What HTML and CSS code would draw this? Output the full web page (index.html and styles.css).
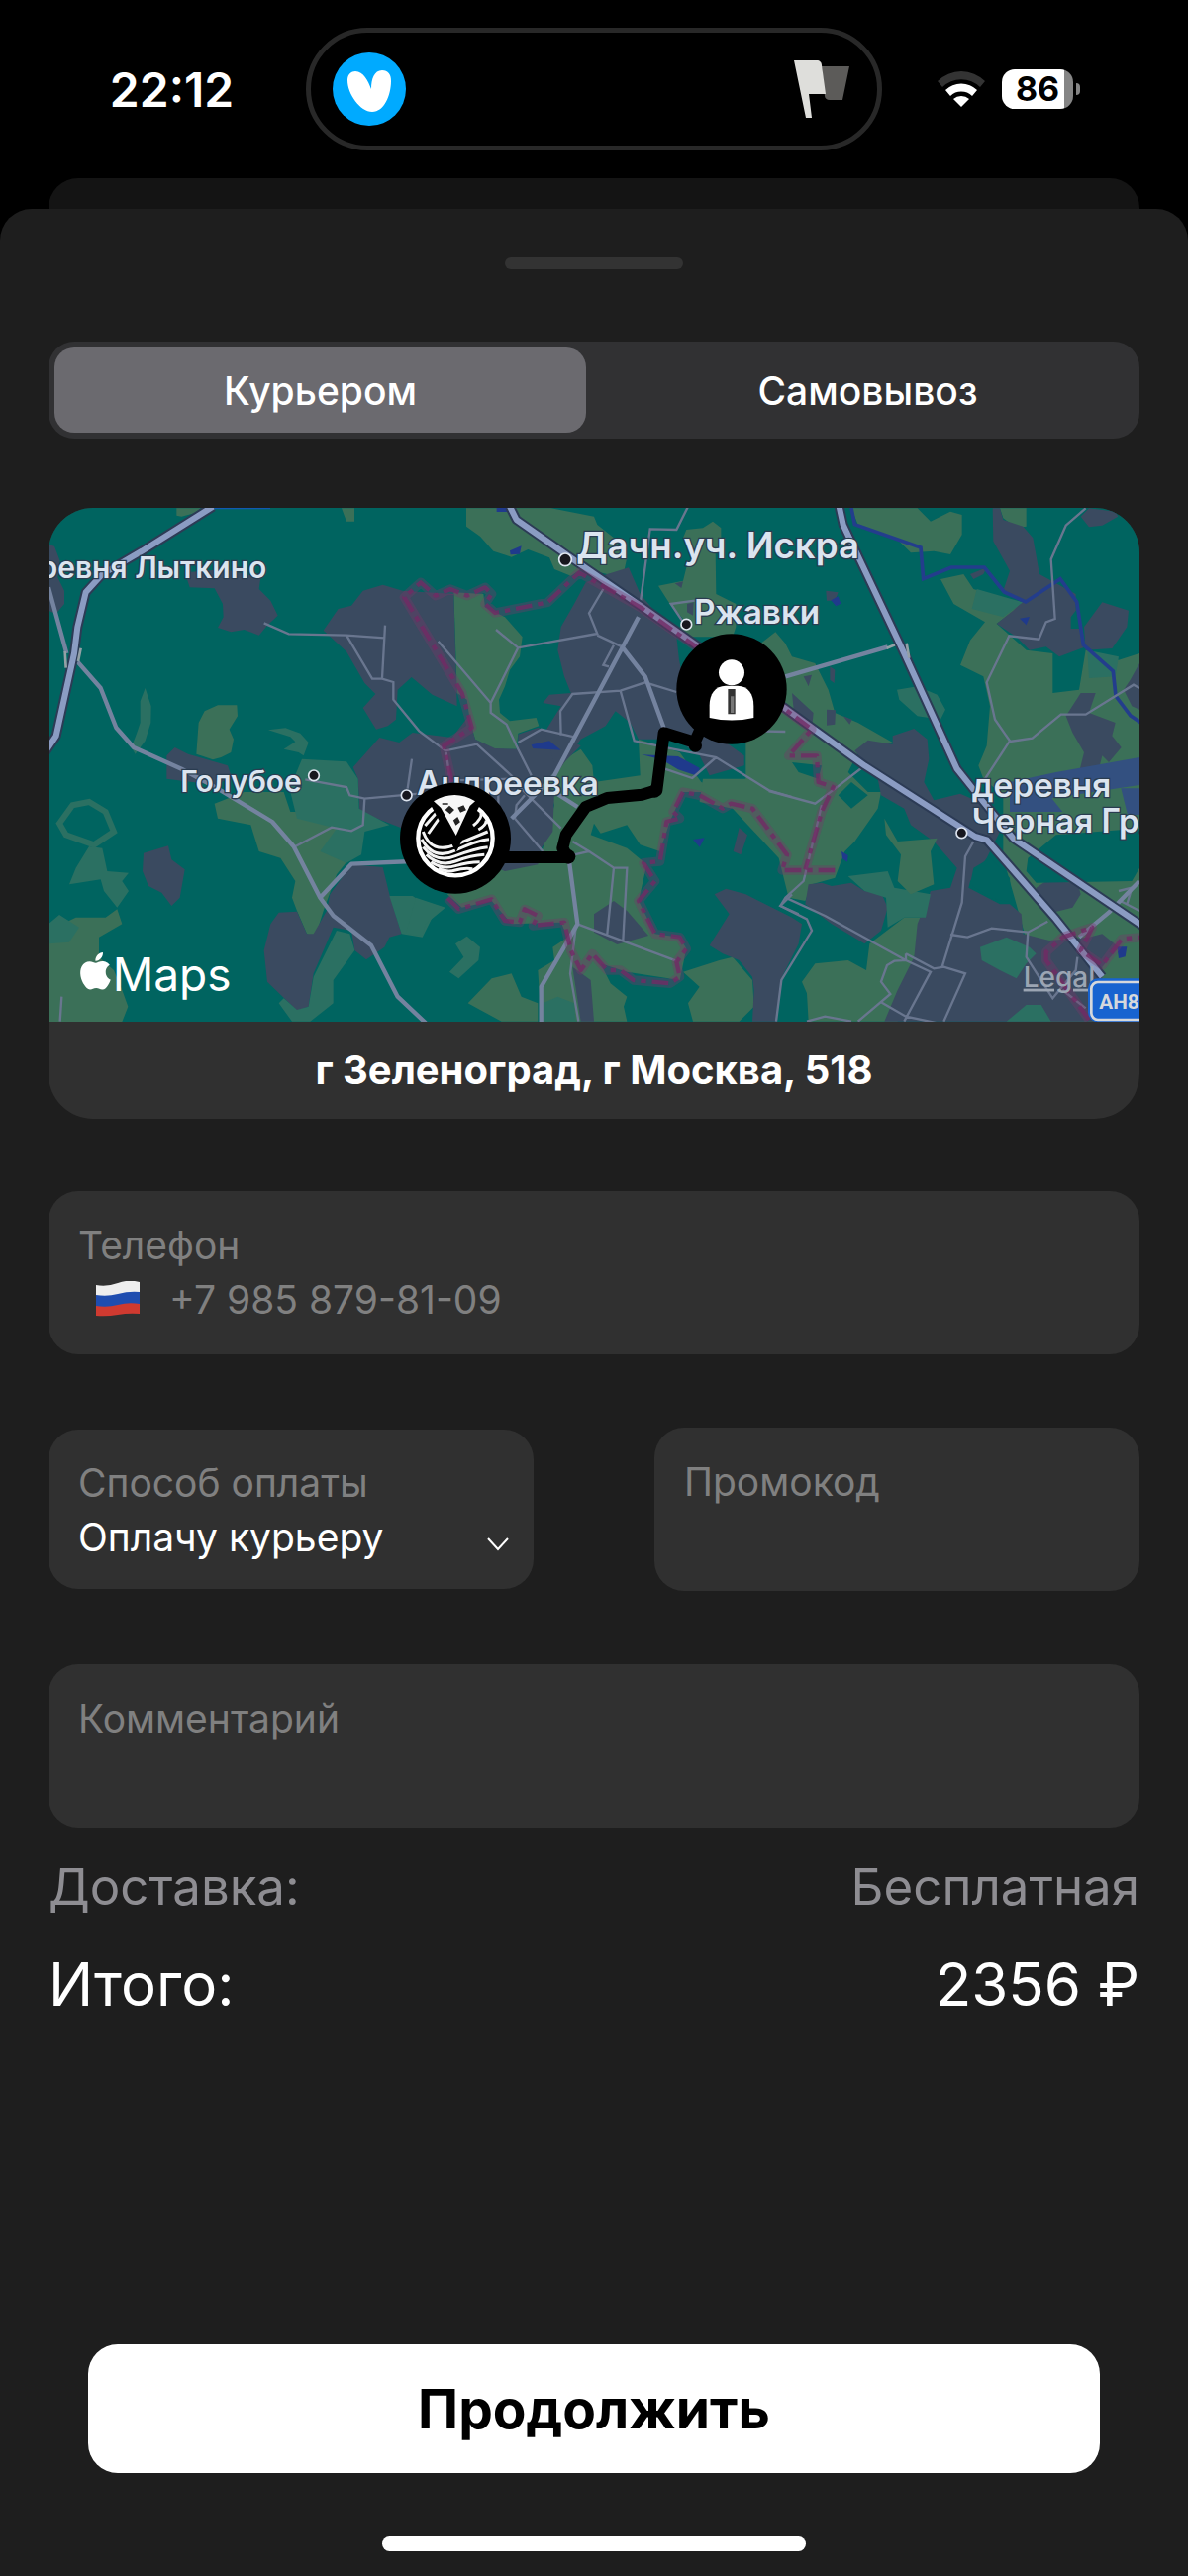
FILE: index.html
```html
<!DOCTYPE html>
<html lang="ru">
<head>
  <meta charset="UTF-8">
  <meta name="viewport" content="width=device-width, initial-scale=1.0">
  <title>Оформление заказа</title>
  <link rel="stylesheet" href="styles.css">
</head>
<body>
  <header class="status-bar">
    <div class="status-left">22:12</div>
    <div class="island">
      <svg class="island-logo" viewBox="0 0 74 74" aria-hidden="true">
        <circle cx="37" cy="37" r="37" fill="#00aaff"/>
        <path d="M15 28c0-6 4-9 8-9 8 0 13 10 16 18 0-10 3-19 11-19 6 0 9 4 9 11 0 14-7 31-19 31S15 42 15 28z" fill="#fff"/>
      </svg>
      <svg class="island-flag" viewBox="0 0 56 58" aria-hidden="true">
        <path d="M28 6h28l-7 34H36c-3 0-5-2-5-4z" fill="#5c5b59"/>
        <path d="M0 0h23c3 0 5 2 5 5l4 29H15l3 24h-6z" fill="#dededb"/>
      </svg>
    </div>
    <div class="status-right">
      <svg class="wifi" viewBox="0 0 48 36" aria-hidden="true">
        <path d="M0 10a34 34 0 0 1 48 0l-5 6a27 27 0 0 0-38 0z" fill="#333"/>
        <path d="M8 19a23 23 0 0 1 32 0l-5 6a16 16 0 0 0-22 0z" fill="#fff"/>
        <path d="M16 28a12 12 0 0 1 16 0l-8 8z" fill="#fff"/>
      </svg>
      <div class="battery"><span>86</span></div>
      <div class="battery-tip"></div>
    </div>
  </header>

  <div class="sheet-behind"></div>

  <main class="sheet">
    <div class="handle"></div>

    <div class="segmented">
      <button class="segment active" type="button">Курьером</button>
      <button class="segment" type="button">Самовывоз</button>
    </div>

    <section class="map-card">
      <svg class="map" viewBox="0 0 3306 1557" preserveAspectRatio="xMidYMid slice">
        <!-- meadows -->
        <g fill="#3b7058">
          <g transform="translate(-27 -39)">
            <path d="M415 40H488L470 55 430 65 415 62zM915 40H954V80H930zM540 637L598 637 600 670 575 710 588 740 580 780 550 795 525 802 475 785 482 690 500 655z"/>
            <path d="M530 935L620 900 740 900 760 960 900 960 960 1030 940 1100 900 1150 860 1260 835 1340 810 1330 780 1260 765 1220 775 1170 730 1100 665 1080 640 1000 540 980z"/>
          </g>
          <g transform="translate(1053 -39)">
            <path d="M213 40H470L600 65 610 90 660 130 700 190 690 235 640 240 600 230 560 225 530 245 480 225 465 190 400 165 350 188 295 170 255 125 213 95z"/>
            <path d="M175 295L265 300 270 340 330 370 383 430 375 490 345 530 330 580 312 620 315 660 345 685 425 675 433 700 370 722 365 770 300 770 240 740 225 690 215 620 185 600z"/>
            <path d="M795 275L870 260 880 220 900 180 870 130 880 105 930 100 960 80 985 100 985 140 968 170 970 300 1030 330 1030 400 1020 430 850 430 870 375 830 330z"/>
          </g>
          <g transform="translate(1053 861)">
            <path d="M480 40L450 -60 560 -130 595 -80 600 -30 740 -50 735 -160 860 -120 925 -30 1000 0 870 0 830 90 800 180 740 160 700 100 620 125 600 95 590 130 700 170 760 220 735 330 785 430 860 440 880 475 860 570 700 545 620 520 650 580 700 620 690 650 700 695H440L430 540 480 510 475 470 520 440 500 395 350 400 290 330 200 350 155 310 330 230 440 190z"/>
            <path d="M290 565L350 550 380 620 430 640V695H320L218 640zM900 695L885 640 920 590 870 545 980 510 1020 500 1080 570 1085 650 1040 695z"/>
          </g>
          <g transform="translate(2193 -39)">
            <path d="M-60 470L10 415 40 450 60 490 130 510 170 590 190 660 260 690 365 750 260 780 230 840 290 900 330 900 320 950 250 1050 220 1080 190 1160 120 1180 100 1230 50 1220 20 1100 -120 950 -220 930 -210 860 -80 860 -80 740z"/>
            <path d="M240 40H440L480 80 540 50 575 60 575 120 540 180 490 170 420 175 380 135 260 90zM690 40H770V95L740 100 700 70z"/>
            <path d="M510 255L580 240 610 285 690 310 760 330 680 390 770 470 850 480 850 600 930 590 950 470 1050 500 1113 480V1595H840L700 1100 700 910 640 860 625 820 650 760 660 640 640 550 570 515 600 440 645 385 550 330z"/>
          </g>
          <g transform="translate(2193 861)">
            <path d="M90 575L130 520 230 510 285 540 295 460 400 380 470 380 430 500 380 695H110L105 610z"/>
          </g>
          <path d="M0 1281L83 1241 173 1241 208 1216 223 1261 153 1301 153 1361 198 1401 223 1461 241 1511 223 1557H0z"/>
        </g>

        <!-- built-up areas -->
        <g fill="#3a4a60">
          <g transform="translate(-27 -39)">
            <path d="M27 150L45 155 62 200 55 250 75 290 75 330 50 360 27 350zM440 235L560 225 670 250 665 285 700 320 722 365 690 395 665 425 620 408 580 415 540 402 557 370 555 330 530 283 455 280z"/>
            <path d="M860 410L905 345 945 335 980 290 1040 272 1100 290 1255 300 1265 640 1190 605 1127 552 1085 590 1080 680 1055 700 1020 710 980 645 1018 603 985 570 930 475z"/>
            <path d="M950 825L1030 735 1090 750 1130 720 1250 735 1300 670 1320 740 1380 768 1450 770 1450 725 1510 705 1580 730 1640 760 1530 870 1560 900 1555 1020 1520 1070 1510 1120 1410 1140 1100 1010 970 960 965 860z"/>
            <path d="M385 790L410 765 450 785 570 820 580 850 540 880 385 860z"/>
          </g>
          <g transform="translate(1053 -39)">
            <path d="M705 220L740 300 850 430 858 500 900 700 1000 750 1055 790 1055 820 950 850 920 790 850 740 735 740 710 690 665 655 635 700 560 740 490 840 450 720 500 640 445 630 465 605 530 600 510 550 490 470 500 400 540 330 575 265 640 240z"/>
            <path d="M845 268L870 262 865 282zM882 330L902 325 900 365 882 355z"/>
          </g>
          <g transform="translate(2193 -39)">
            <path d="M668 40H690L700 75 760 95 790 130 810 240 920 300 920 350 905 370 905 405 940 405 950 460 870 490 830 460 780 470 740 430 680 390 730 350 760 320 700 290 720 230 670 140z"/>
            <path d="M1000 325L1080 350 1075 400 1030 465 950 470 945 400zM935 65L960 40 1040 50 1048 65 1000 92 960 97zM60 600L125 660 120 710 65 650zM165 650L192 652 190 695 165 698zM1113 510L1085 560 1065 590 1090 640 1113 650z"/>
            <path d="M890 670L935 600 980 600 960 660 1040 690 1030 730 1058 765 1020 810 1000 790 990 830 930 840 945 780 910 720zM600 240L650 220 640 240 610 255zM163 290L200 295 190 320 165 320zM95 550L120 545 110 580zM175 520L190 530 188 570 175 560zM215 670L242 680 235 695z"/>
            <path d="M250 775L290 743 365 755V730L430 708 470 740 475 800 460 870 490 925 570 905 650 940 700 1000 650 1100 600 1170 595 1190 690 1240 720 1240 755 1270 760 1330 840 1350 960 1340 1000 1330 1050 1370 1000 1430 1000 1595H340L380 1500 430 1400 440 1300 480 1200 540 1190 560 1130 490 1050 420 1000 400 950 330 910 320 860z"/>
          </g>
          <g transform="translate(2193 861)">
            <path d="M800 290L830 270 925 275 935 310 910 350 850 365 800 330zM110 280L150 275 180 285 240 275 280 300 330 305 350 350 330 420 280 460 180 400 100 340z"/>
          </g>
          <g transform="translate(1053 861)">
            <path d="M965 310L1000 293 1060 310 1200 380 1230 400 1220 460 1165 570 1155 695H1080L1085 600 1080 560 1040 510 990 490 950 465 1010 370zM600 370L660 330 700 360 765 435 670 462 600 425zM535 530L590 570 600 695H560zM1040 108L1065 130 1045 190 1022 180z"/>
          </g>
          <g transform="translate(-27 861)">
            <path d="M315 185L390 163 400 205 440 235 425 320 400 345 370 305 330 285 312 240zM880 310L945 220 1040 228 1060 310 1097 430 1060 440 1045 470 990 508 955 480 945 420 890 410 830 550 815 650 780 662 690 575 680 480 700 400 725 365 780 362 810 430 830 430 870 360z"/>
          </g>
        </g>

        <!-- light woods -->
        <g fill="#2b7062">
          <g transform="translate(-27 -39)">
            <path d="M320 585L338 640 337 690 320 745 290 785 278 765 295 720 305 690 305 625zM693 712L745 706 790 722 815 750 800 790 785 780 740 770 775 748 760 733z"/>
            <path d="M795 800L930 808 965 860 968 950 1060 1000 985 1020 975 1090 930 1115 850 1080 900 1010 780 980 760 900 740 890 770 860z"/>
          </g>
          <g transform="translate(-27 861)">
            <path d="M60 95L100 40 150 30 200 60 225 120 165 160 80 130z" fill="none" stroke="#2b7062" stroke-width="18"/>
            <path d="M150 165L190 170 205 240 270 245 250 270 270 300 235 350 195 300 185 265 90 280 110 230zM27 400L60 372 120 410 90 455 27 460zM900 420L940 430 955 480 890 570 890 640 820 695H765L725 640 740 625 780 660 815 650 830 560zM1060 315L1130 315 1200 360 1160 440 1097 430z"/>
          </g>
          <g transform="translate(1053 861)">
            <path d="M60 320L150 350 90 400 80 435 30 430zM180 460L215 437 255 470 250 510 190 565 162 545 205 500zM445 640L490 620 540 640 545 695H445z"/>
          </g>
          <g transform="translate(2193 -39)">
            <path d="M620 285L760 325 700 370 605 345zM378 590L440 580 500 605 525 650 510 680 440 670 385 620zM955 470L1050 490 1040 550 960 555z"/>
          </g>
          <g transform="translate(2193 861)">
            <path d="M230 255L350 240 370 290 480 310 465 380 400 380 350 410 345 320 280 300zM630 470L710 440 780 470 800 490 770 520 740 565 690 540 635 510zM710 695L770 645 815 645 845 695z"/>
          </g>
        </g>

        <!-- dense forest inside other areas -->
        <g fill="#006460" transform="translate(2193 861)">
          <path d="M660 200L720 260 725 335 660 320 600 280 610 230zM775 200L860 130 1113 110V230L1090 270 800 275 770 240zM200 10L240 -30 290 10 240 50zM60 -90L150 -80 140 -40 80 -60z"/>
        </g>
        <path d="M3306 756L3053 801 2913 831 2913 921 3073 921 3040 880 3306 840zM3250 850H3306V930H3270z" fill="#335080"/>
        <path d="M2533 941L2573 1011 2693 1001 2673 1041 2683 1141 2613 1171 2573 1131 2583 1051 2538 991z" fill="#3b7058"/>

        <!-- water -->
        <g fill="#1f3a8c">
          <path d="M1358 0h32v12h-32zM1398 130l35-15-5 25-28 2zM1463 718l55-12 35 28-85-5zM1798 748l110 5 65 35-5 25-60-20-50-30zM1953 1005l35-5-15 28zM2371 280l22-12 8 22-15 8zM2943 335l30-5-10 25zM2403 1041l20 12-2 20-15-10zM3238 1330l30 0-5 30-20 5z"/>
          <path d="M2433 0l10 50 200 70 8 95 85-35h100l60 75 65 30 105-70 50 70 20 130 90 80 8 75 45 60 30 20" fill="none" stroke="#233d8c" stroke-width="11"/>
        </g>
        <path d="M500 0h172" stroke="#1059b0" stroke-width="8"/>

        <!-- minor roads -->
        <g fill="none" stroke="#69768f" stroke-width="7">
          <g transform="translate(-27 -39)">
            <path d="M680 388L755 421 930 425 1045 433M1047 395L1038 555M930 425L1008 557 1038 557 1072 567V620L1150 715 1230 775 1325 755 1435 855M805 862L930 885 940 910 985 920 1150 905M1115 890L1128 800M985 920L980 1000 945 1018 885 1007 775 1065M62 1595L67 1520M1232 780L1245 870"/>
          </g>
          <g transform="translate(1053 -39)">
            <path d="M885 35L850 105 770 103 740 330M628 285L585 358 610 420 370 463 303 408M370 463L287 630 128 443M287 630V660L335 695 370 770 410 850M610 425L685 460 M660 455L628 515 645 520M370 750L440 710 540 733M500 728L498 655 535 603 680 593 755 568 850 597M680 593L722 745 840 770 970 795 1130 895 1200 915M815 830L898 858 970 795M905 320L833 330 880 400M1090 715L1180 717"/>
          </g>
          <g transform="translate(1053 861)">
            <path d="M170 -35L350 -40 500 110M390 10L365 40 360 80 445 180M310 -30V70M540 190L585 180 535 150M585 180L660 230H700L688 450M660 230L640 430M550 400L850 512M545 410L528 550 553 695M1200 310L1165 345 1220 370"/>
          </g>
          <g transform="translate(2193 -39)">
            <path d="M950 40L890 92 845 195 857 375 830 385 808 437 718 427 650 568 675 680 720 745 645 860M720 747L788 737 875 665H950L1095 575 1113 585M270 828L190 890 130 935 -10 897"/>
          </g>
          <g transform="translate(2193 861)">
            <path d="M150 40L95 270 40 320 25 345 105 385 120 420 28 570 12 695M40 320L160 375 405 510 480 545 400 695M405 490L490 535 520 530 585 550 520 695M405 490V510L370 512 348 525 330 575 358 612 260 695M330 637L405 680 500 700M105 695L160 680 240 695M610 150L585 195 575 335 515 530M540 432L592 440 665 413 775 425 835 392M775 425L770 500 850 625 920 540 925 500M880 600L950 655M1055 330L1113 360M1050 300L1090 290 1075 340"/>
          </g>
        </g>

        <!-- secondary roads -->
        <g class="secondary">
          <g transform="translate(-27 -39)">
            <path d="M27 280L82 480M115 505L185 585 232 705 285 765 430 830 540 890 705 990 770 1065 850 1220 890 1275 1005 1365 1085 1520 1170 1600M850 1220L945 1118 1130 1110"/>
          </g>
          <g transform="translate(1053 -39)">
            <path d="M735 370L480 850 350 980M480 900L550 945M685 460L755 550 815 715M525 1110L550 1300 440 1490V1600M1180 550L1490 460"/>
          </g>
          <path d="M3123 1301L3213 1226 3306 1131"/>
        </g>

        <!-- highways -->
        <path id="highways" class="highway-casing" d="M498 -4L283 131 163 201 113 256 88 361 78 441 23 691 -10 740M1398 -4L1418 36 1568 141 1793 296 1963 416 2233 608 2473 781 2808 996 2843 1006 3053 1246 3193 1421M2396 -4L2408 51 2593 441 2753 791 2833 891 2923 1001 3320 1270"/>
        <path class="highway" d="M498 -4L283 131 163 201 113 256 88 361 78 441 23 691 -10 740M1398 -4L1418 36 1568 141 1793 296 1963 416 2233 608 2473 781 2808 996 2843 1006 3053 1246 3193 1421M2396 -4L2408 51 2593 441 2753 791 2833 891 2923 1001 3320 1270"/>
        <path d="M50 435l3 50M98 425l-8 40M2540 425l25-10M2600 410l8 45" fill="none" stroke="#93a0a6" stroke-width="8"/>

        <!-- city border -->
        <g class="border" transform="translate(1053 -39)">
          <path id="city" d="M170 870L145 760 230 705 200 600 25 310 75 265 120 305 165 285 215 305 270 280 290 300 270 330 300 357 460 325 555 235 740 340 910 460 1180 650 1260 710 1190 790 1275 790 1280 870 1325 885 1290 960 1240 1135M1330 1137H1170L1185 1090 1080 950 1015 935 990 950 920 910 870 900 840 960 860 980 820 990 800 1110 750 1115 785 1170 735 1230 785 1330 860 1340 880 1375 850 1415 860 1460 830 1480 720 1470 680 1440 640 1440 595 1390 560 1440 530 1380 510 1295 415 1305 430 1275 390 1255 375 1295 330 1290 290 1225 190 1255 155 1220M2100 1590L1970 1410V1385L2020 1340 2110 1310 2075 1380 2140 1425 2200 1345 2260 1340"/>
          <use href="#city" class="border-dash"/>
        </g>

        <!-- courier route -->
        <path d="M1300 1059H1573L1558 1031 1568 991 1628 906 1693 879 1798 869 1843 856 1865 682 1958 710 1985 650" fill="none" stroke="#000" stroke-width="36" stroke-linejoin="round"/>
        <circle cx="1575" cy="1057" r="22"/>
        <circle cx="1837" cy="858" r="20"/>
        <circle cx="1960" cy="720" r="20"/>

        <!-- place names -->
        <g class="towns">
          <circle cx="1566" cy="157" r="19"/>
          <circle cx="1933" cy="353" r="16"/>
          <circle cx="804" cy="811" r="16"/>
          <circle cx="1085" cy="871" r="16"/>
          <circle cx="2767" cy="985" r="16"/>
        </g>
        <g class="place">
          <text x="661" y="213" text-anchor="end">деревня Лыткино</text>
          <text class="place-large" x="1600" y="152">Дачн.уч. Искра</text>
          <text class="place-medium" x="1956" y="352">Ржавки</text>
          <text x="400" y="861">Голубое</text>
          <text class="place-medium" x="1116" y="870">Андреевка</text>
          <text class="place-medium" x="2798" y="877">деревня</text>
          <text class="place-medium" x="2798" y="983">Черная Грязь</text>
        </g>

        <!-- restaurant pin -->
        <g transform="translate(1233 1001)">
          <circle r="168"/>
          <circle r="113" fill="#000" stroke="#fff" stroke-width="13"/>
          <g fill="none" stroke="#f4f4f4" stroke-width="9">
            <path d="M-98 -20q25 70 98 40t98-40M-102 3q35 65 102 34t102-34M-98 27q40 50 98 27t98-27M-88 50q40 38 88 20t88-20M-74 72q36 24 74 12t74-12M-52 93q28 11 52 4t52-4"/>
            <path d="M-92 -38l35-40M-82 -14l34-48M36 -46q18-20 14-38M54 -38q28-22 24-40M70 -26q22-12 24-28"/>
          </g>
          <path d="M-66 -112Q0 -156 66 -112L2 14z" fill="#000" stroke="#000" stroke-width="26"/>
          <path d="M-66 -112Q-2 -150 60 -112L44 -98 2 -8 -44 -92z" fill="#f7f7f7"/>
          <path d="M-28 -86l10-10 12 10-10 10zM10 -92l14-6 6 12-14 6zM-4 -54l10-8 6 12-10 8zM-40 -104h18" fill="#222" stroke="#222" stroke-width="4"/>
        </g>

        <!-- customer pin -->
        <g transform="translate(2070 549)">
          <circle r="167"/>
          <circle cy="-50" r="39" fill="#fff"/>
          <path d="M-67 87V50C-67 15-50-10-18-10H18C50-10 67 15 67 50V87Q0 102-67 87z" fill="#fff"/>
          <path d="M-11 0H11V76H-11z" fill="#333"/>
          <path d="M-3 22H7V72H-3z" fill="#777"/>
        </g>

        <g transform="translate(86 1347) scale(4.7)" fill="#fff">
          <path d="M12.152 6.896c-.948 0-2.415-1.078-3.96-1.04-2.04.027-3.91 1.183-4.961 3.014-2.117 3.675-.546 9.103 1.519 12.09 1.013 1.454 2.208 3.09 3.792 3.039 1.52-.065 2.09-.987 3.935-.987 1.831 0 2.35.987 3.96.948 1.637-.026 2.676-1.48 3.676-2.948 1.156-1.688 1.636-3.325 1.662-3.415-.039-.013-3.182-1.221-3.22-4.857-.026-3.04 2.48-4.494 2.597-4.559-1.429-2.09-3.623-2.324-4.39-2.376-2-.156-3.675 1.09-4.61 1.09zM15.53 3.83c.843-1.012 1.4-2.427 1.245-3.83-1.207.052-2.662.805-3.532 1.818-.78.896-1.454 2.338-1.273 3.714 1.338.104 2.715-.688 3.559-1.701"/>
        </g>
        <text class="maps-word" x="194" y="1463">Maps</text>

        <a href="#legal"><text class="legal" x="2954" y="1451">Legal</text></a>
        <rect x="3150" y="1426" width="220" height="132" rx="30" fill="#1763d0"/>
        <rect x="3160" y="1437" width="220" height="114" rx="20" fill="#1763d0" stroke="#d5d8dc" stroke-width="8"/>
        <text class="shield" x="3184" y="1518">AH8</text>
      </svg>
      <p class="address">г Зеленоград, г Москва, 518</p>
    </section>

    <form class="form" id="order">
      <div class="field">
        <label for="phone">Телефон</label>
        <div class="phone-row">
          <svg class="flag" viewBox="0 0 44 36" aria-hidden="true">
            <path d="M0 4Q11 6 22 2T44 1V12Q33 11 22 14T0 15z" fill="#eee"/>
            <path d="M0 14Q11 16 22 13T44 11V24Q33 22 22 25T0 26z" fill="#1f4db0"/>
            <path d="M0 25Q11 27 22 24T44 23V33Q33 32 22 34T0 35z" fill="#cf3a30"/>
          </svg>
          <input id="phone" type="tel" placeholder="+7 985 879-81-09">
        </div>
      </div>

      <div class="field-row">
        <div class="field field-select">
          <label for="payment">Способ оплаты</label>
          <div class="select-row">
            <select id="payment">
              <option>Оплачу курьеру</option>
            </select>
            <svg class="chevron" viewBox="0 0 24 32" aria-hidden="true">
              <path d="M2 18l10 11 10-11" fill="none" stroke="#fff" stroke-width="2"/>
            </svg>
          </div>
        </div>
        <div class="field">
          <label for="promo">Промокод</label>
          <input id="promo" type="text">
        </div>
      </div>

      <div class="field">
        <label for="comment">Комментарий</label>
        <input id="comment" type="text">
      </div>
    </form>

    <dl class="totals">
      <div class="total-row delivery">
        <dt>Доставка:</dt>
        <dd>Бесплатная</dd>
      </div>
      <div class="total-row sum">
        <dt>Итого:</dt>
        <dd>2356 ₽</dd>
      </div>
    </dl>

    <button class="submit" type="submit" form="order">Продолжить</button>
    <div class="home-indicator"></div>
  </main>
</body>
</html>
```
FILE: styles.css
```css
* {
  box-sizing: border-box;
}

body {
  margin: 0;
  min-height: 100vh;
  display: flex;
  flex-direction: column;
  background-color: #000;
  color: #fff;
  font-family: Inter, 'Liberation Sans', sans-serif;
  font-size: 39px;
}

button, input, select {
  font-family: inherit;
  font-size: inherit;
  color: inherit;
}

/* Status bar */
.status-bar {
  display: grid;
  grid-template-columns: 1fr 582px 1fr;
  align-items: center;
  height: 180px;
}

.status-left, .status-right {
  display: flex;
  align-items: center;
}

.status-left {
  justify-content: center;
  padding-left: 38px;
  font-size: 48px;
  font-weight: 600;
}

.status-right {
  padding-left: 56px;
}

.island {
  height: 124px;
  display: flex;
  align-items: center;
  justify-content: space-between;
  padding: 0 28px 0 22px;
  border: 5px solid #282828;
  border-radius: 62px;
}

.island-logo {
  width: 74px;
  height: 74px;
}

.island-flag {
  width: 56px;
  height: 58px;
}

.wifi {
  width: 48px;
  height: 36px;
  margin-right: 17px;
}

.battery {
  width: 72px;
  height: 40px;
  border-radius: 13px;
  background: linear-gradient(to right, #fff 87%, #858585 87%);
  color: #000;
  font-size: 34px;
  font-weight: 700;
  line-height: 40px;
  text-align: center;
}

.battery-tip {
  width: 4px;
  height: 12px;
  margin-left: 3px;
  border-radius: 0 4px 4px 0;
  background-color: #858585;
}

/* Sheets */
.sheet-behind {
  height: 31px;
  margin: 0 49px;
  border-radius: 30px 30px 0 0;
  background-color: #141414;
}

.sheet {
  flex: 1;
  display: flex;
  flex-direction: column;
  padding: 49px 49px 25px;
  border-radius: 32px 32px 0 0;
  background-color: #1e1e1e;
}

.handle {
  width: 180px;
  height: 12px;
  margin: 0 auto 73px;
  border-radius: 6px;
  background-color: #333;
}

.segmented {
  display: flex;
  gap: 16px;
  height: 98px;
  padding: 6px;
  border-radius: 26px;
  background-color: #313133;
}

.segment {
  flex: 1;
  border: none;
  border-radius: 20px;
  background: none;
  font-weight: 500;
  cursor: pointer;
}

.segment.active {
  background-color: #6b6a6f;
}

/* Map */
.map-card {
  margin-top: 70px;
  border-radius: 45px;
  overflow: hidden;
  background-color: #303030;
}

.map {
  display: block;
  width: 100%;
  background-color: #006460;
}

.secondary {
  fill: none;
  stroke: #74839f;
  stroke-width: 13;
  stroke-linejoin: round;
}

.highway-casing, .highway {
  fill: none;
  stroke: #2c3b55;
  stroke-width: 30;
  stroke-linejoin: round;
}

.highway {
  stroke: #8b9cc3;
  stroke-width: 18;
}

.border {
  fill: none;
  stroke: rgba(120, 55, 105, 0.35);
  stroke-width: 28;
  stroke-linejoin: round;
}

.border-dash {
  stroke: rgba(112, 42, 100, 0.8);
  stroke-width: 13;
  stroke-dasharray: 50 18 16 18;
}

.towns {
  fill: #17171f;
  stroke: #dde4ef;
  stroke-width: 5;
}

.place {
  fill: #dbe4ef;
  stroke: #2a3c50;
  stroke-width: 8;
  paint-order: stroke;
  font-size: 90px;
  font-weight: 600;
}

.place-medium {
  font-size: 100px;
}

.place-large {
  font-size: 110px;
}

.maps-word {
  fill: #fff;
  font-size: 138px;
  font-weight: 400;
}

.legal {
  fill: #9ba5b3;
  font-size: 84px;
  font-weight: 500;
  text-decoration: underline;
}

.shield {
  fill: #d5d8dc;
  font-family: Roboto, sans-serif;
  font-size: 62px;
  font-weight: 700;
}

.address {
  margin: 0;
  line-height: 98px;
  font-size: 40px;
  font-weight: 700;
  text-align: center;
}

/* Form */
.form {
  display: flex;
  flex-direction: column;
  gap: 74px;
  margin-top: 73px;
}

.field {
  padding: 28px 30px 29px;
  border-radius: 30px;
  background-color: #303030;
}

.field label {
  display: block;
  line-height: 54px;
  color: #808080;
}

.field input, .field select {
  display: block;
  width: 100%;
  height: 54px;
  padding: 0;
  border: none;
  outline: none;
  background: none;
}

.field input::placeholder {
  color: #808080;
  opacity: 1;
}

.phone-row {
  display: flex;
  align-items: center;
  gap: 30px;
  padding-left: 18px;
}

.flag {
  flex: none;
  width: 44px;
  height: 36px;
}

.field-row {
  display: grid;
  grid-template-columns: 1fr 1fr;
  gap: 122px;
  align-items: center;
}

.field-select {
  padding: 27px 24px 26px 30px;
}

.select-row {
  display: flex;
  align-items: center;
}

.field select {
  appearance: none;
}

.chevron {
  flex: none;
  width: 24px;
  height: 32px;
}

/* Totals */
.totals {
  margin: 11px 0 0;
}

.total-row {
  display: flex;
  justify-content: space-between;
  line-height: 98px;
}

.total-row dd {
  margin: 0;
}

.delivery {
  color: #8e8d92;
  font-size: 51px;
}

.sum {
  font-size: 60px;
}

.submit {
  height: 130px;
  margin: auto 40px 64px;
  border: none;
  border-radius: 30px;
  background-color: #fff;
  color: #000;
  font-size: 55px;
  font-weight: 700;
  cursor: pointer;
}

.home-indicator {
  width: 428px;
  height: 15px;
  margin: 0 auto;
  border-radius: 8px;
  background-color: #fff;
}
```
